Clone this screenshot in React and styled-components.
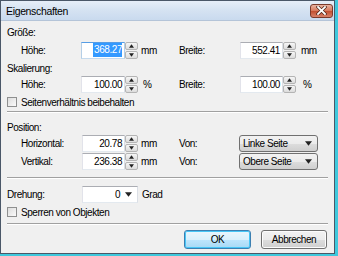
import React from 'react';
import styled, { createGlobalStyle } from 'styled-components';

const GlobalStyle = createGlobalStyle`
  html, body {
    margin: 0;
    padding: 0;
    background: #3ec8dc;
  }
  body {
    font-family: "Liberation Sans", Arial, sans-serif;
    font-size: 10px;
    letter-spacing: -0.45px;
    color: #000;
  }
`;

const Window = styled.div`
  width: 335px;
  height: 254px;
  box-sizing: border-box;
  border: 1px solid #4a5768;
  background: #f0f0f0;
  display: flex;
  flex-direction: column;
`;

const TitleBar = styled.div`
  height: 19px;
  flex: none;
  display: flex;
  align-items: center;
  justify-content: space-between;
  padding: 0 1px 0 5px;
  background: linear-gradient(#e6eef8, #d6e3f2 45%, #c9daee);
  border-bottom: 1px solid #b4c4d8;
  font-size: 10.5px;
  letter-spacing: -0.35px;
`;

const CloseButton = styled.div`
  width: 23px;
  height: 14px;
  box-sizing: border-box;
  border: 1px solid #7a3a2a;
  border-radius: 3px;
  background: linear-gradient(#e9b3a1, #d77a5d 48%, #c24f2f 52%, #d8826a);
  display: flex;
  align-items: center;
  justify-content: center;
`;

const Body = styled.div`
  flex: 1;
  display: flex;
  flex-direction: column;
  padding: 6px 6px 0 6px;
`;

const GroupLabel = styled.div`
  height: 12px;
  line-height: 12px;
  margin-top: ${(p) => p.$top || 0}px;
`;

const FieldRow = styled.div`
  height: 18px;
  display: flex;
  align-items: center;
  margin-top: ${(p) => p.$top || 0}px;
`;

const Half = styled.div`
  display: flex;
  align-items: center;
  width: ${(p) => p.$width}px;
  padding-left: ${(p) => p.$indent || 0}px;
  box-sizing: border-box;
`;

const Label = styled.span`
  width: ${(p) => p.$width}px;
  flex: none;
`;

const SpinBox = styled.div`
  display: flex;
  align-items: center;
  height: 17px;
`;

const TextField = styled.div`
  width: ${(p) => p.$width || 44}px;
  height: 17px;
  box-sizing: border-box;
  background: #fff;
  border: 1px solid ${(p) => (p.$focused ? '#569de5' : '#abadb3')};
  border-bottom-color: ${(p) => (p.$focused ? '#c5daed' : '#e3e9ef')};
  border-left-color: ${(p) => (p.$focused ? '#b5cfe7' : '#e2e3ea')};
  border-right-color: ${(p) => (p.$focused ? '#b5cfe7' : '#dbdfe6')};
  display: flex;
  align-items: center;
  justify-content: flex-end;
  padding-right: 2px;
  line-height: 13px;
`;

const Selected = styled.span`
  background: #3399ff;
  color: #fff;
  line-height: 14px;
  padding-left: 1px;
`;

const Spinner = styled.div`
  width: 13px;
  height: 17px;
  display: flex;
  flex-direction: column;
  gap: 1px;
`;

const SpinButton = styled.div`
  flex: 1;
  box-sizing: border-box;
  border: 1px solid #b4b4b4;
  border-radius: 2px;
  background: linear-gradient(#f6f6f6, #dcdcdc);
  display: flex;
  align-items: center;
  justify-content: center;
`;

const Unit = styled.span`
  margin-left: ${(p) => p.$gap || 3}px;
`;

const CheckRow = styled.div`
  height: 18px;
  display: flex;
  align-items: center;
  gap: 4px;
`;

const CheckBox = styled.div`
  width: 10px;
  height: 10px;
  box-sizing: border-box;
  border: 1px solid #8e8f8f;
  background: linear-gradient(135deg, #dcdcdc, #fbfbfb);
`;

const Separator = styled.div`
  height: 1px;
  background: #a0a0a0;
  border-bottom: 1px solid #fff;
  margin-top: ${(p) => p.$top || 0}px;
`;

const Select = styled.div`
  width: 79px;
  height: 17px;
  box-sizing: border-box;
  border: 1px solid #707070;
  border-radius: 3px;
  background: linear-gradient(#f2f2f2, #ebebeb 50%, #dddddd 51%, #cfcfcf);
  display: flex;
  align-items: center;
  justify-content: space-between;
  padding: 0 5px 0 3px;
`;

const ComboField = styled(TextField)`
  gap: 5px;
  padding-right: 5px;
`;

const ButtonRow = styled.div`
  display: flex;
  justify-content: flex-end;
  gap: 10px;
  margin-top: 5px;
  padding-right: 1px;
`;

const Button = styled.div`
  width: ${(p) => p.$width}px;
  height: 19px;
  box-sizing: border-box;
  border: 1px solid ${(p) => (p.$default ? '#3c7fb1' : '#707070')};
  border-radius: 3px;
  background: ${(p) =>
    p.$default
      ? 'linear-gradient(#eaf6fd, #d9f0fc 50%, #bee6fd 51%, #a7d9f5)'
      : 'linear-gradient(#f2f2f2, #ebebeb 50%, #dddddd 51%, #cfcfcf)'};
  box-shadow: ${(p) => (p.$default ? 'inset 0 0 0 1px #48c6f6' : 'inset 0 0 0 1px #fcfcfc')};
  display: flex;
  align-items: center;
  justify-content: center;
`;

const Arrow = ({ up, size = 5 }) => (
  <svg width={size} height={Math.ceil(size / 2) + 1} viewBox="0 0 6 4">
    {up ? <path d="M0 4 L3 0 L6 4 Z" fill="#222" /> : <path d="M0 0 L6 0 L3 4 Z" fill="#222" />}
  </svg>
);

const Spin = ({ value, focused, width }) => (
  <SpinBox>
    <TextField $focused={focused} $width={width}>
      {focused ? <Selected>{value}</Selected> : value}
    </TextField>
    <Spinner>
      <SpinButton><Arrow up size={5} /></SpinButton>
      <SpinButton><Arrow size={5} /></SpinButton>
    </Spinner>
  </SpinBox>
);

const DropDown = ({ value }) => (
  <Select>
    <span>{value}</span>
    <Arrow size={7} />
  </Select>
);

export default function App() {
  return (
    <>
      <GlobalStyle />
      <Window>
        <TitleBar>
          <span>Eigenschaften</span>
          <CloseButton>
            <svg width="11" height="9" viewBox="0 0 11 9">
              <path d="M2 1 L9 8 M9 1 L2 8" stroke="#4a2216" strokeWidth="3.2" strokeLinecap="square" />
              <path d="M2 1 L9 8 M9 1 L2 8" stroke="#fff" strokeWidth="1.8" strokeLinecap="square" />
            </svg>
          </CloseButton>
        </TitleBar>
        <Body>
          <GroupLabel>Größe:</GroupLabel>
          <FieldRow $top={2}>
            <Half $width={173} $indent={14}>
              <Label $width={60}>Höhe:</Label>
              <Spin value="368.27" focused />
              <Unit>mm</Unit>
            </Half>
            <Half $width={150}>
              <Label $width={61}>Breite:</Label>
              <Spin value="552.41" width={43} />
              <Unit $gap={5}>mm</Unit>
            </Half>
          </FieldRow>

          <GroupLabel $top={4}>Skalierung:</GroupLabel>
          <FieldRow>
            <Half $width={173} $indent={14}>
              <Label $width={60}>Höhe:</Label>
              <Spin value="100.00" />
              <Unit $gap={5}>%</Unit>
            </Half>
            <Half $width={150}>
              <Label $width={61}>Breite:</Label>
              <Spin value="100.00" width={43} />
              <Unit $gap={7}>%</Unit>
            </Half>
          </FieldRow>
          <CheckRow>
            <CheckBox />
            <span>Seitenverhältnis beibehalten</span>
          </CheckRow>

          <Separator />

          <GroupLabel $top={9}>Position:</GroupLabel>
          <FieldRow>
            <Half $width={173} $indent={14}>
              <Label $width={61}>Horizontal:</Label>
              <Spin value="20.78" width={43} />
              <Unit>mm</Unit>
            </Half>
            <Half $width={150}>
              <Label $width={60}>Von:</Label>
              <DropDown value="Linke Seite" />
            </Half>
          </FieldRow>
          <FieldRow>
            <Half $width={173} $indent={14}>
              <Label $width={61}>Vertikal:</Label>
              <Spin value="236.38" width={43} />
              <Unit>mm</Unit>
            </Half>
            <Half $width={150}>
              <Label $width={60}>Von:</Label>
              <DropDown value="Obere Seite" />
            </Half>
          </FieldRow>

          <Separator $top={7} />

          <FieldRow $top={6}>
            <Label $width={75}>Drehung:</Label>
            <ComboField $width={56}>
              <span>0</span>
              <Arrow size={7} />
            </ComboField>
            <Unit $gap={4}>Grad</Unit>
          </FieldRow>
          <CheckRow>
            <CheckBox />
            <span>Sperren von Objekten</span>
          </CheckRow>

          <Separator $top={2} />

          <ButtonRow>
            <Button $width={67} $default>OK</Button>
            <Button $width={66}>Abbrechen</Button>
          </ButtonRow>
        </Body>
      </Window>
    </>
  );
}
